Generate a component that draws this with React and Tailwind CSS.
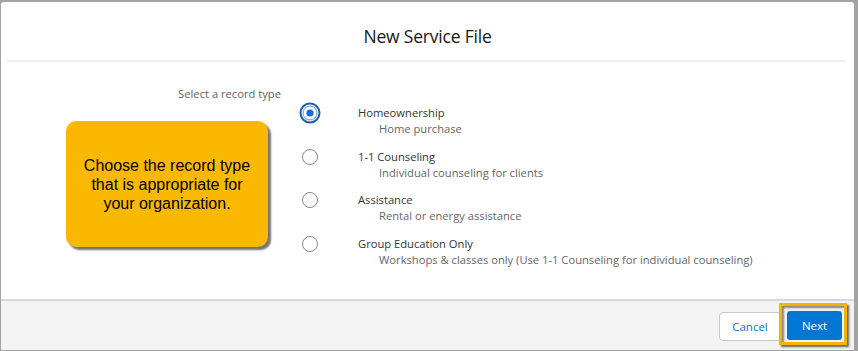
import React, { useState } from "react";

const types = [
  { name: "Homeownership", desc: "Home purchase" },
  { name: "1-1 Counseling", desc: "Individual counseling for clients" },
  { name: "Assistance", desc: "Rental or energy assistance" },
  { name: "Group Education Only", desc: "Workshops & classes only (Use 1-1 Counseling for individual counseling)" },
];

function Radio({ checked }) {
  if (checked) {
    return (
      <svg width="22" height="22" viewBox="0 0 22 22" className="shrink-0">
        <circle cx="11" cy="11" r="9.5" fill="none" stroke="#1b5fb0" strokeWidth="2" />
        <circle cx="11" cy="11" r="7" fill="#fff" stroke="#6d8fc0" strokeWidth="1" />
        <circle cx="11" cy="11" r="3.6" fill="#0b6fd6" />
      </svg>
    );
  }
  return (
    <svg width="22" height="22" viewBox="0 0 22 22" className="shrink-0">
      <circle cx="11" cy="11" r="7.5" fill="#fff" stroke="#8a8a8a" strokeWidth="1" />
    </svg>
  );
}

export default function App() {
  const [selected, setSelected] = useState(0);

  return (
    <div className="w-[858px] h-[351px] bg-[#a3a3a3] pt-[2px] pl-[1px] overflow-hidden">
      <div className="w-[853px] h-[348px] bg-white rounded-t-[3px] flex flex-col font-['Open_Sans',sans-serif]">
        <div className="h-[58px] flex items-center justify-center pt-[10px]">
          <h2 className="text-[17.5px] text-[#181818] tracking-[-0.2px]">New Service File</h2>
        </div>
        <div className="h-[2px] bg-[#efefef] ml-[6px] mr-[9px]" />

        <div className="flex-1 flex pt-[24px]">
          <div className="w-[280px] shrink-0">
            <p className="text-right text-[11.2px] leading-[16px] text-[#5f5f5f]">Select a record type</p>
            <div className="ml-[65px] mt-[19px] w-[202px] h-[126px] bg-[#fbb800] rounded-[10px] shadow-[3px_3px_2px_rgba(0,0,0,0.55)] flex items-center justify-center">
              <p className="text-center text-[16px] leading-[19px] text-black font-['Liberation_Sans',Arial,sans-serif]">
                Choose the record type<br />that is appropriate for<br />your organization.
              </p>
            </div>
          </div>

          <div className="pl-[18px] pt-[19px] flex flex-col gap-[11.67px]">
            {types.map((t, i) => (
              <label key={t.name} className="flex items-start cursor-pointer" onClick={() => setSelected(i)}>
                <div className="w-[22px] h-[16px] flex items-center justify-center">
                  <Radio checked={selected === i} />
                </div>
                <div className="ml-[37px]">
                  <div className="text-[11.2px] leading-[16px] text-[#333333]">{t.name}</div>
                  <div className="pl-[21px] text-[11.2px] leading-[16px] text-[#666666]">{t.desc}</div>
                </div>
              </label>
            ))}
          </div>
        </div>

        <div className="h-[51px] border-t-2 border-[#d8d8d8] bg-[#f3f3f3] flex items-start justify-end pr-[7px] pt-[2px]">
          <button className="mt-[9px] w-[62px] h-[29px] bg-white border border-[#c9c9c9] rounded-[4px] text-[11.5px] text-[#0b6fd6] -mr-[2px]">
            Cancel
          </button>
          <div className="relative w-[68px] h-[42px] border-[3px] border-[#f5b400] shadow-[2px_2px_2px_rgba(0,0,0,0.6)] bg-[#f3f3f3] pl-[5px] pt-[5px]">
            <div className="absolute inset-0 shadow-[inset_2px_2px_2px_rgba(0,0,0,0.45)] pointer-events-none" />
            <button className="w-[55px] h-[29px] bg-[#0176d3] rounded-[3px] text-[11.5px] text-white">
              Next
            </button>
          </div>
        </div>
      </div>
    </div>
  );
}
